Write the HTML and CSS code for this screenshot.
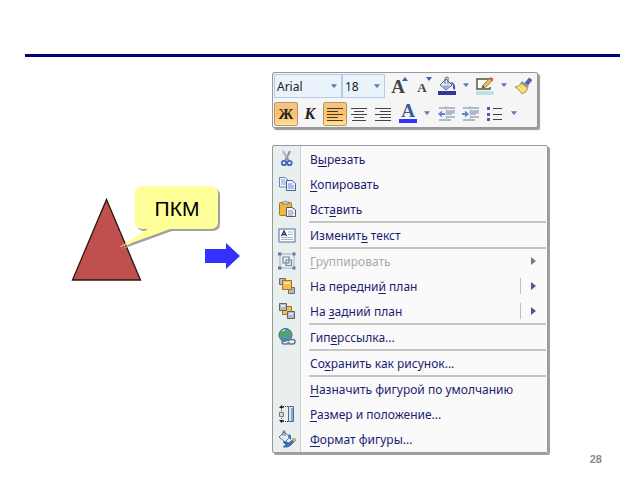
FILE: index.html
```
<!DOCTYPE html>
<html lang="ru">
<head>
<meta charset="utf-8">
<meta name="viewport" content="width=device-width, initial-scale=1">
<title>ПКМ</title>
<link rel="stylesheet" href="styles.css">
</head>
<body>
<div class="slide">
  <hr class="rule">
  <main class="content">
    <svg class="scene" viewBox="0 57 272 390">
      <defs>
        <filter id="shadow" x="-10%" y="-10%" width="130%" height="130%">
          <feDropShadow dx="2" dy="2" stdDeviation="0.5" flood-color="#a0a0a0" flood-opacity="1"/>
        </filter>
      </defs>
      <path d="M106.500 199.500 L140.500 280 H72.500 Z" fill="#c0504d" stroke="#2b1513" stroke-width="1.300"/>
      <path filter="url(#shadow)" fill="#ffff99" d="M143 186 H210 Q218 186 218 194 V222 Q218 229 210 229 H170 L119 247.500 L148 229 H143 Q134.500 229 134.500 222 V194 Q134.500 186 143 186 Z"/>
      <path d="M119 247.500 L126 243 L127 244.600 Z" fill="#f5a25a"/>
      <text class="callout" x="177" y="216" text-anchor="middle">ПКМ</text>
      <path d="M205 249 H226 V243 L240 256 L226 269 V263 H205 Z" fill="#3333ff"/>
    </svg>

    <div class="panels">
      <div class="toolbar" role="toolbar" aria-label="Форматирование">
        <div class="row">
          <div class="group">
            <div class="combo combo-font"><select aria-label="Шрифт"><option>Arial</option></select><svg class="caret" viewBox="0 0 7 4"><path d="M0 0H7L4 4H3Z"/></svg></div>
            <div class="combo combo-size"><select aria-label="Размер"><option>18</option></select><svg class="caret" viewBox="0 0 7 4"><path d="M0 0H7L4 4H3Z"/></svg></div>
          </div>
          <div class="group">
            <button class="tool" aria-label="Увеличить размер"><span class="grow">A</span><svg class="mark" viewBox="0 0 6 4"><path d="M0 4L3 0L6 4Z" fill="#3c5ea8"/></svg></button>
            <button class="tool" aria-label="Уменьшить размер"><span class="shrink">A</span><svg class="mark" viewBox="0 0 6 4"><path d="M0 0H6L3 4Z" fill="#3c5ea8"/></svg></button>
          </div>
          <div class="group">
            <button class="tool" aria-label="Заливка фигуры"><svg class="icon" viewBox="0 0 20 20"><path d="M3 9L9 3L15 9L9 14Z" fill="#dfe9f7" stroke="#53648c"/><path d="M5 10L13 9L9 13Z" fill="#8caad8"/><path d="M8 8V3Q8 1 10 1T11 3V8" fill="none" stroke="#53648c"/><path d="M13 6Q19 6 18 14Q15 13 16 9Z" fill="#355da5"/><path d="M1 15H19V19H1Z" fill="#333399"/></svg></button>
            <button class="drop" aria-label="Цвета заливки"><svg class="caret" viewBox="0 0 7 4"><path d="M0 0H7L4 4H3Z"/></svg></button>
            <button class="tool" aria-label="Контур фигуры"><svg class="icon" viewBox="0 0 20 20"><path d="M14 3H2V13H15V11" fill="#fafaf5" stroke="#4d5040" stroke-width="1.400"/><path d="M7 12L8 9L15 2L18 4L11 11Z" fill="#e9bb53" stroke="#8a672c" stroke-width=".7"/><path d="M14 3L16 1L18.500 3L17 5Z" fill="#c75d50"/><path d="M7 12L8 9.500L9.500 11Z" fill="#333"/><path d="M1 15H19V19H1Z" fill="#bfe2e3"/></svg></button>
            <button class="drop" aria-label="Цвета контура"><svg class="caret" viewBox="0 0 7 4"><path d="M0 0H7L4 4H3Z"/></svg></button>
          </div>
          <div class="group">
            <button class="tool" aria-label="Формат по образцу"><svg class="icon" viewBox="0 0 20 20"><path d="M11 7L15 2L18 4L14 9Z" fill="#5a63a8" stroke="#414a86" stroke-width=".6"/><path d="M8 5L15 10L13 13L6 8Z" fill="#8d94b8"/><path d="M7 7L14 12Q13 16 8 18Q6 14 1 11Q5 11 7 7Z" fill="#efd867" stroke="#9d8932" stroke-width=".8"/><path d="M5 11L9 16M8 10L11 14" stroke="#fff5b3"/></svg></button>
          </div>
        </div>
        <div class="row">
          <div class="group">
            <button class="tool active" aria-pressed="true"><b class="bold">Ж</b></button>
            <button class="tool"><i class="italic">К</i></button>
          </div>
          <div class="group">
            <button class="tool active" aria-label="По левому краю" aria-pressed="true"><svg class="icon" viewBox="0 0 20 20"><path d="M2 4.500H18M2 7.500H13M2 10.500H18M2 13.500H13M2 16.500H18" stroke="#4b3a1c" stroke-width="1.200"/></svg></button>
            <button class="tool" aria-label="По центру"><svg class="icon" viewBox="0 0 20 20"><path d="M2 4.500H18M5 7.500H15M2 10.500H18M5 13.500H15M3 16.500H17" stroke="#444" stroke-width="1.200"/></svg></button>
            <button class="tool" aria-label="По правому краю"><svg class="icon" viewBox="0 0 20 20"><path d="M2 4.500H18M7 7.500H18M2 10.500H18M7 13.500H18M2 16.500H18" stroke="#444" stroke-width="1.200"/></svg></button>
          </div>
          <div class="group">
            <button class="tool color" aria-label="Цвет текста"><span class="letter">A</span></button>
            <button class="drop" aria-label="Цвета текста"><svg class="caret" viewBox="0 0 7 4"><path d="M0 0H7L4 4H3Z"/></svg></button>
          </div>
          <div class="group">
            <button class="tool" aria-label="Уменьшить отступ"><svg class="icon" viewBox="0 0 20 20"><path d="M2 4H18M9 7H18M9 10H15M9 13H18M2 16H14" stroke="#71809f" stroke-width="1.200"/><path d="M9 8.500H18" stroke="#a9bad8" stroke-width="2"/><path d="M1 10L5 6.500V9H8V11H5V13.500Z" fill="#6286c4"/><path d="M9 2V18" stroke="#9aa7bf" stroke-dasharray="1 1"/></svg></button>
            <button class="tool" aria-label="Увеличить отступ"><svg class="icon" viewBox="0 0 20 20"><path d="M2 4H18M9 7H18M9 10H15M9 13H18M2 16H14" stroke="#71809f" stroke-width="1.200"/><path d="M9 8.500H18" stroke="#a9bad8" stroke-width="2"/><path d="M8 10L4 6.500V9H1V11H4V13.500Z" fill="#6286c4"/><path d="M9 2V18" stroke="#9aa7bf" stroke-dasharray="1 1"/></svg></button>
            <button class="tool" aria-label="Маркеры"><svg class="icon" viewBox="0 0 20 20"><path d="M8 4.500H17M8 10.500H17M8 15.500H17" stroke="#444"/><path d="M2 3H5V6H2ZM2 9H5V12H2ZM2 14H5V17H2Z" fill="#4f5fa0"/></svg></button>
            <button class="drop" aria-label="Виды маркеров"><svg class="caret" viewBox="0 0 7 4"><path d="M0 0H7L4 4H3Z"/></svg></button>
          </div>
        </div>
      </div>

      <div class="menu" role="menu">
        <div class="section">
          <button class="item" role="menuitem"><svg class="icon" viewBox="0 0 20 20"><path d="M6 2L12 12M13 2L8 12" stroke="#8395ab" stroke-width="2"/><path d="M6 2L10 8" stroke="#d4dee8"/><circle cx="7" cy="14" r="2.200" fill="none" stroke="#3f67b5" stroke-width="1.800"/><circle cx="12.500" cy="14" r="2.200" fill="none" stroke="#3f67b5" stroke-width="1.800"/></svg><span>В<u>ы</u>резать</span></button>
          <button class="item" role="menuitem"><svg class="icon" viewBox="0 0 20 20"><path d="M2.500 3.500H8L11 6V13H2.500Z" fill="#f4f8ff" stroke="#6884b9"/><path d="M4 6H8M4 8H9M4 10H9" stroke="#7e9bd0"/><path d="M9.500 6.500H15L18.500 9.500V16.500H9.500Z" fill="#f0f5ff" stroke="#4565a7"/><path d="M11 10H15M11 12H17M11 14H17" stroke="#668ace"/></svg><span><u>К</u>опировать</span></button>
          <button class="item" role="menuitem"><svg class="icon" viewBox="0 0 20 20"><rect x="2.500" y="3.500" width="12" height="13" rx="1" fill="#efb83e" stroke="#a27728"/><path d="M5 5V3H7Q8 1 10 3H12V5Z" fill="#d7d9de" stroke="#747070" stroke-width=".8"/><path d="M9.500 8.500H15L18.500 11V17.500H9.500Z" fill="#f5f7fc" stroke="#4d5876"/><path d="M11 12H16M11 14H17M11 16H16" stroke="#8290ad"/></svg><span>Вст<u>а</u>вить</span></button>
        </div>
        <hr>
        <div class="section">
          <button class="item" role="menuitem"><svg class="icon" viewBox="0 0 20 20"><rect x="2" y="4" width="16" height="13" fill="#fbfcfe" stroke="#6d83aa" stroke-width="1.200"/><path d="M4.500 11L7 6L9.500 11M5.500 9.500H8.500" fill="none" stroke="#263d6b" stroke-width="1.300"/><path d="M11 7H16M11 9.500H16M4 12.500H16M4 14.500H16" stroke="#91a3c1" stroke-width=".8"/></svg><span>Изменит<u>ь</u> текст</span></button>
        </div>
        <hr>
        <div class="section">
          <button class="item" role="menuitem" disabled><svg class="icon" viewBox="0 0 20 20"><path d="M3 3H17V17H3Z" fill="none" stroke="#a3afc0"/><path d="M6 6H12V12H6ZM9 9H14.500V14.500H9Z" fill="none" stroke="#7186a4" stroke-width="1.200"/><path d="M1 1.500H4.500V4.500H1ZM15.500 1.500H18.500V4.500H15.500ZM1 15.500H4.500V18.500H1ZM15.500 15.500H18.500V18.500H15.500Z" fill="#647a9c"/></svg><span><u>Г</u>руппировать</span><svg class="sub" viewBox="0 0 5 8"><path d="M0 0L5 4L0 8Z"/></svg></button>
          <button class="item split" role="menuitem"><svg class="icon" viewBox="0 0 20 20"><path d="M2.500 2.500H8.500V8.500H2.500ZM11.500 11.500H17.500V17.500H11.500Z" fill="#b5b9c0" stroke="#676c75"/><rect x="5.500" y="4.500" width="9" height="9" fill="#f3bd50" stroke="#a47831"/><path d="M7 6H13V8H7Z" fill="#ffe3a1"/></svg><span>На передни<u>й</u> план</span><svg class="sub" viewBox="0 0 5 8"><path d="M0 0L5 4L0 8Z"/></svg></button>
          <button class="item split" role="menuitem"><svg class="icon" viewBox="0 0 20 20"><rect x="5.500" y="5.500" width="9" height="8" fill="#f3bd50" stroke="#a47831"/><path d="M2.500 2.500H9.500V9.500H2.500ZM10.500 10.500H17.500V17.500H10.500Z" fill="#b5b9c2" stroke="#5f6672"/><path d="M4 4H8V6H4ZM12 12H16V14H12Z" fill="#e1e4e8"/></svg><span>На <u>з</u>адний план</span><svg class="sub" viewBox="0 0 5 8"><path d="M0 0L5 4L0 8Z"/></svg></button>
        </div>
        <hr>
        <div class="section">
          <button class="item" role="menuitem"><svg class="icon" viewBox="0 0 20 20"><circle cx="8.500" cy="8" r="6.500" fill="#4f9ac4" stroke="#316d8c"/><path d="M3 6Q5 2 9 2L7 6L9 8L6 12Q3 10 3 6ZM10 3Q14 4 14 8L12 11L10 8Z" fill="#56a64c"/><path d="M5 4L8 3" stroke="#d7f3e6"/><rect x="5" y="12.500" width="7" height="4.500" rx="2.200" fill="none" stroke="#667794" stroke-width="1.500"/><rect x="11" y="12.500" width="7" height="4.500" rx="2.200" fill="none" stroke="#667794" stroke-width="1.500"/><path d="M9 14.700H14" stroke="#e5ebf4"/></svg><span>Гип<u>е</u>рссылка...</span></button>
        </div>
        <hr>
        <div class="section">
          <button class="item" role="menuitem"><i class="icon"></i><span>Со<u>х</u>ранить как рисунок...</span></button>
        </div>
        <hr>
        <div class="section">
          <button class="item" role="menuitem"><i class="icon"></i><span><u>Н</u>азначить фигурой по умолчанию</span></button>
          <button class="item" role="menuitem"><svg class="icon" viewBox="0 0 20 20"><path d="M11.500 2.500H16.500V17.500H11.500Z" fill="#dce6f4" stroke="#536b96"/><path d="M15 4V17" stroke="#8ba5ce" stroke-width="2"/><path d="M2.500 8.500H6.500V12.500H2.500Z" fill="#d7dade" stroke="#777"/><path d="M4.500 1L7 4H2ZM4.500 19L7 16H2Z" fill="#222"/><path d="M4.500 4V7M4.500 14V16M6 2.500H11M6 17.500H11" stroke="#333" stroke-dasharray="1 1"/></svg><span><u>Р</u>азмер и положение...</span></button>
          <button class="item" role="menuitem"><svg class="icon" viewBox="0 0 20 20"><path d="M2 8L7 3L13 8L8 13Z" fill="#e7eef8" stroke="#5c7199"/><path d="M6 7V3Q6 1 8 2V7" fill="none" stroke="#5c7199"/><path d="M12 5Q15 6 14 11L11 8Z" fill="#426eb8"/><path d="M6 13Q10 12 12 14L17 9L19 11L14 16Q11 19 6 18L9 16Z" fill="#3e70bd" stroke="#31558e" stroke-width=".6"/><path d="M15 11L17 9L19 11L17 13Z" fill="#e8b451"/></svg><span><u>Ф</u>ормат фигуры...</span></button>
        </div>
      </div>
    </div>
  </main>
  <footer class="page">28</footer>
</div>
</body>
</html>
```
FILE: styles.css
```
* { box-sizing: border-box; }

body {
  margin: 0;
  background: #fff;
  font-family: "Noto Sans", "Open Sans", sans-serif;
  font-size: 12px;
}

button, select {
  margin: 0;
  padding: 0;
  border: 0;
  background: none;
  color: inherit;
  font: inherit;
}

.slide { padding-top: 54px; }

.rule {
  height: 3px;
  margin: 0 20px 0 25px;
  border: 0;
  background: #000080;
}

.content {
  display: grid;
  grid-template-columns: 17fr 23fr;
  align-items: start;
}

.scene { display: block; width: 100%; }

.callout {
  font-family: "Liberation Sans", Arial, sans-serif;
  font-size: 21px;
}

.panels {
  display: flex;
  flex-direction: column;
  align-items: flex-start;
  gap: 17px;
  padding-top: 15px;
}

/* Mini toolbar */
.toolbar {
  display: flex;
  flex-direction: column;
  gap: 4px;
  padding: 1px;
  border: 1px solid #999;
  border-radius: 2px;
  background: #f5f5f5;
  box-shadow: 2px 2px 1px #999;
}

.row { display: flex; gap: 1px; }
.group { display: flex; }

.combo {
  display: flex;
  align-items: center;
  height: 24px;
  padding-right: 4px;
  border: 1px solid #b5cbe8;
  background: #eaf2fb;
  color: #222;
}
.combo-font { width: 68px; }
.combo-size { width: 43px; }
.combo select {
  flex: 1;
  min-width: 0;
  padding-left: 2px;
  appearance: none;
}

.caret { width: 6px; height: 4px; fill: #5b80bd; }

.tool, .drop {
  display: flex;
  align-items: center;
  justify-content: center;
  height: 24px;
}
.tool { position: relative; width: 24px; font-family: "Liberation Serif", serif; }
.drop { width: 14px; padding-bottom: 2px; }
.icon { flex: none; width: 20px; height: 20px; }

.active {
  border: 1px solid #b8976a;
  border-radius: 2px;
  background: linear-gradient(#f3c588, #fcc068 50%, #ffe29a);
}

.grow, .shrink { color: #444; font-weight: bold; line-height: 24px; }
.grow { padding-top: 2px; font-size: 19px; }
.shrink { padding-top: 4px; font-size: 13px; }
.mark { position: absolute; top: 3px; right: 2px; width: 6px; height: 4px; }

.bold { color: #222; font-size: 15px; }
.italic { color: #222; font-size: 16px; font-weight: bold; }

.color { align-items: flex-start; }
.letter {
  width: 18px;
  border-bottom: 4px solid #3333ff;
  color: #3c5a9c;
  font-size: 19px;
  font-weight: bold;
  line-height: 17px;
}

/* Context menu */
.menu {
  width: 276px;
  padding: 1px;
  border: 1px solid #999;
  border-radius: 2px;
  background: linear-gradient(90deg, #e9eeee 27px, #c9cdcd 27px, #c9cdcd 28px, #fafafa 28px);
  box-shadow: 2px 2px 0 #a0a0a0;
  color: #1c1c70;
}

.menu hr {
  height: 2px;
  margin: 0 0 0 35px;
  border: 0;
  background: #c5c5c5;
}

.section { display: flex; flex-direction: column; gap: 1px; }

.item {
  display: flex;
  align-items: center;
  gap: 13px;
  height: 24px;
  padding: 0 10px 0 3px;
  text-align: left;
}
.item span { flex: 1; }
.item u { text-underline-offset: 2px; }
.item:disabled { color: #aaa; }

.sub { width: 5px; height: 8px; fill: #4a55a0; }
.item:disabled .sub { fill: #777; }
.split .sub {
  width: 16px;
  height: 16px;
  padding: 4px 0 4px 10px;
  border-left: 1px solid #c3c0b4;
}

/* Page number */
.page {
  padding-right: 38px;
  color: #8c8c8c;
  font: bold 11px/12px "Liberation Sans", Arial, sans-serif;
  text-align: right;
}
```
